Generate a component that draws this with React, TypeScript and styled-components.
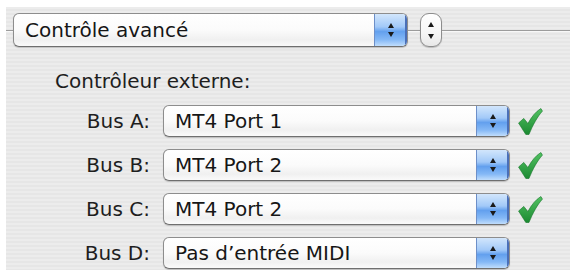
import React from "react";
import styled, { createGlobalStyle } from "styled-components";

const GlobalStyle = createGlobalStyle`
  html, body {
    margin: 0;
    padding: 0;
    background: #ffffff;
  }
  body {
    font-family: "DejaVu Sans", "Liberation Sans", sans-serif;
    color: #1e1e1e;
  }
`;

const Page = styled.div`
  padding: 7px 3px 3px 6px;
  width: 573px;
  height: 273px;
  box-sizing: border-box;
`;

const Panel = styled.div`
  height: 263px;
  background: repeating-linear-gradient(
    180deg,
    #ececec 0px,
    #ececec 2px,
    #e6e6e6 2px,
    #e6e6e6 4px
  );
  display: flex;
  flex-direction: column;
  overflow: hidden;
`;

const Header = styled.div`
  display: flex;
  align-items: center;
  margin-top: 6px;
  height: 34px;
`;

const Rule = styled.div<{ $width?: number }>`
  height: 1px;
  background: #9c9c9c;
  box-shadow: 0 1px 0 #f8f8f8;
  ${(p) => (p.$width ? `width: ${p.$width}px;` : "flex: 1;")}
`;

const PopupBox = styled.div<{ $width: number; $height: number }>`
  width: ${(p) => p.$width}px;
  height: ${(p) => p.$height}px;
  box-sizing: border-box;
  display: flex;
  border: 1px solid #8d8d8d;
  border-bottom-color: #6f6f6f;
  border-radius: 6px;
  overflow: hidden;
  background: linear-gradient(180deg, #ffffff 0%, #fbfbfb 50%, #f0f0f0 80%, #fafafa 100%);
  box-shadow: 0 1px 1px rgba(0, 0, 0, 0.18);
`;

const PopupText = styled.div`
  flex: 1;
  display: flex;
  align-items: center;
  padding-left: 11px;
  font-size: 20px;
  color: #161616;
  white-space: nowrap;
`;

const ArrowPart = styled.div`
  width: 32px;
  display: flex;
  flex-direction: column;
  align-items: center;
  justify-content: center;
  gap: 4px;
  border-left: 1px solid #6d8fc8;
  background: linear-gradient(
    180deg,
    #d2e6fc 0%,
    #a2c9f8 40%,
    #63a0ee 55%,
    #84b8f6 80%,
    #c0ddfc 100%
  );
  box-shadow: inset -2px 0 0 #4a6fb8;
`;

const TriUp = styled.div`
  width: 0;
  height: 0;
  border-left: 3.5px solid transparent;
  border-right: 3.5px solid transparent;
  border-bottom: 5px solid #1a1a1a;
`;

const TriDown = styled.div`
  width: 0;
  height: 0;
  border-left: 3.5px solid transparent;
  border-right: 3.5px solid transparent;
  border-top: 5px solid #1a1a1a;
`;

const Stepper = styled.div`
  width: 22px;
  height: 34px;
  box-sizing: border-box;
  border: 1px solid #8d8d8d;
  border-radius: 9px;
  background: linear-gradient(180deg, #ffffff 0%, #f6f6f6 60%, #e8e8e8 100%);
  box-shadow: 0 1px 1px rgba(0, 0, 0, 0.2);
  display: flex;
  flex-direction: column;
  align-items: center;
  justify-content: center;
  gap: 7px;
`;

const Section = styled.div`
  padding-left: 49px;
  margin-top: 22px;
  font-size: 20px;
  color: #1e1e1e;
`;

const Rows = styled.div`
  display: grid;
  grid-template-columns: 108px 347px 40px;
  row-gap: 12px;
  margin-top: 12px;
`;

const Label = styled.div`
  font-size: 20px;
  color: #1e1e1e;
  text-align: right;
  align-self: center;
  padding-right: 13px;
`;

const CheckCell = styled.div`
  display: flex;
  align-items: center;
  padding-left: 8px;
`;

function Popup({ label, width, height }: { label: string; width: number; height: number }) {
  return (
    <PopupBox $width={width} $height={height}>
      <PopupText>{label}</PopupText>
      <ArrowPart>
        <TriUp />
        <TriDown />
      </ArrowPart>
    </PopupBox>
  );
}

function Check() {
  return (
    <svg width="25" height="27" viewBox="0 0 24 26">
      <defs>
        <linearGradient id="chk" x1="0" y1="0" x2="0" y2="1">
          <stop offset="0" stopColor="#52c262" />
          <stop offset="1" stopColor="#1c8a32" />
        </linearGradient>
      </defs>
      <path
        d="M0.5 14.5 L5.5 10 L9.5 15 C13 8.5 17 3.5 22 0.5 L23.5 3 C18.5 8.5 14.5 16 10.5 25.5 L7.5 25.5 Z"
        fill="url(#chk)"
        stroke="#17772a"
        strokeWidth="0.6"
        strokeLinejoin="round"
      />
    </svg>
  );
}

const buses = [
  { name: "Bus A:", value: "MT4 Port 1", ok: true },
  { name: "Bus B:", value: "MT4 Port 2", ok: true },
  { name: "Bus C:", value: "MT4 Port 2", ok: true },
  { name: "Bus D:", value: "Pas d’entrée MIDI", ok: false },
];

export default function App() {
  return (
    <>
      <GlobalStyle />
      <Page>
        <Panel>
          <Header>
            <Rule $width={7} />
            <Popup label="Contrôle avancé" width={395} height={34} />
            <Rule $width={12} />
            <Stepper>
              <TriUp />
              <TriDown />
            </Stepper>
            <Rule />
          </Header>
          <Section>
            Contrôleur externe:
            <Rows>
              {buses.map((b) => (
                <React.Fragment key={b.name}>
                  <Label>{b.name}</Label>
                  <Popup label={b.value} width={347} height={32} />
                  <CheckCell>{b.ok && <Check />}</CheckCell>
                </React.Fragment>
              ))}
            </Rows>
          </Section>
        </Panel>
      </Page>
    </>
  );
}
